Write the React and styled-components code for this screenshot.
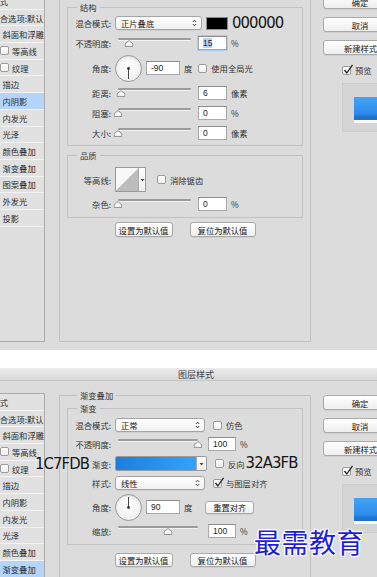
import React from 'react';
import styled, { createGlobalStyle } from 'styled-components';

const GlobalStyle = createGlobalStyle`
  html, body { margin: 0; padding: 0; background: #fff; }
  body { font-family: "Noto Sans CJK SC", "Noto Sans", sans-serif; overflow: hidden; }
  * { box-sizing: border-box; }
`;

const Page = styled.div`
  position: relative;
  width: 377px;
  height: 577px;
  overflow: hidden;
  background: #fff;
`;

const Dialog = styled.div`
  width: 400px;
  height: ${p => p.$h}px;
  background: #dcdcdc;
  overflow: hidden;
`;

const Gap = styled.div`
  height: 18px;
`;

const TitleBar = styled.div`
  height: 13px;
  display: flex;
  align-items: center;
  justify-content: center;
  padding-right: 8px;
  background: linear-gradient(#ececec, #d8d8d8);
  border-bottom: 1px solid #c6c6c6;
  font-size: 9px;
  color: #444;
`;

const Body = styled.div`
  display: flex;
  align-items: flex-start;
  height: ${p => p.$h}px;
  margin-top: ${p => p.$offset}px;
  padding: 8px 0;
`;

const Sidebar = styled.div`
  flex-shrink: 0;
  align-self: stretch;
  width: 60px;
  margin: 4px 0 0 -15px;
  background: #dedede;
  border: 1px solid #acacac;
  border-left: none;
`;

const indents = { head: 6.5, plain: 6.5, fx: 17.5, sub: 15 };

const Item = styled.div`
  height: 16.7px;
  display: flex;
  align-items: center;
  gap: 3px;
  padding-left: ${p => indents[p.$kind]}px;
  background: ${p => (p.$active ? '#b4d4fa' : '#e1e1e1')};
  border-bottom: 1px solid #f3f3f3;
  font-size: 8.3px;
  color: #2c2c2c;
  white-space: nowrap;
`;

const Main = styled.fieldset`
  flex-shrink: 0;
  align-self: stretch;
  width: 252px;
  margin: 0 0 0 14px;
  padding: 0 7px;
  border: 1px solid #c2c2c2;
  min-width: 0;
`;

const Group = styled.fieldset`
  margin: ${p => p.$mt || 0}px 0 0;
  padding: ${p => p.$pt}px 0 ${p => p.$pb}px;
  border: 1px solid #c2c2c2;
  min-width: 0;
`;

const Legend = styled.legend`
  margin-left: ${p => p.$ml}px;
  padding: 0 3px;
  font-size: 8.3px;
  line-height: 13px;
  color: #333;
`;

const Rows = styled.div`
  display: flex;
  flex-direction: column;
  gap: ${p => p.$gap}px;
`;

const Row = styled.div`
  position: relative;
  display: flex;
  align-items: center;
  gap: 4px;
  height: ${p => p.$h || 14}px;
`;

const Label = styled.span`
  flex-shrink: 0;
  width: 43px;
  text-align: right;
  font-size: 8.3px;
  color: #333;
  white-space: nowrap;
`;

const Text = styled.span`
  margin-left: ${p => p.$ml || 0}px;
  font-size: 8.3px;
  color: #333;
  white-space: nowrap;
`;

const Annotation = styled.span`
  margin-left: ${p => p.$ml || 0}px;
  font-family: "Liberation Sans Narrow", "DejaVu Sans Condensed", "Liberation Sans", sans-serif;
  font-size: 16.5px;
  letter-spacing: -0.9px;
  color: #151515;
  line-height: 1;
  white-space: nowrap;
`;

const FloatingAnnotation = styled(Annotation)`
  position: absolute;
  left: -33px;
  top: 50%;
  transform: translateY(-50%);
`;

const Select = styled.div`
  flex-shrink: 0;
  width: ${p => p.$w}px;
  height: 14px;
  display: flex;
  align-items: center;
  justify-content: space-between;
  padding: 0 4px 0 5px;
  background: linear-gradient(#ffffff, #f1f1f1);
  border: 1px solid #a5a5a5;
  border-radius: 3px;
  box-shadow: 0 1px 0 rgba(0, 0, 0, 0.06);
  font-size: 8.3px;
  color: #222;
`;

const Swatch = styled.div`
  flex-shrink: 0;
  width: 22px;
  height: 13px;
  background: #000;
  border: 1px solid #8a8a8a;
`;

const Field = styled.div`
  flex-shrink: 0;
  width: ${p => p.$w}px;
  height: 14px;
  margin-left: ${p => p.$ml || 0}px;
  display: flex;
  align-items: center;
  padding-left: 4px;
  background: #fff;
  border: 1px solid #a8a8a8;
  border-top-color: #8e8e8e;
  box-shadow: ${p => (p.$focus ? '0 0 0 1px #a9c9ee' : 'none')};
  font-family: "Liberation Sans", Arial, sans-serif;
  font-size: 8.5px;
  color: #1e1e1e;
`;

const Selected = styled.span`
  background: #b3d3f8;
`;

const SliderWrap = styled.div`
  position: relative;
  flex-shrink: 0;
  width: ${p => p.$w}px;
  height: 14px;
`;

const Track = styled.div`
  position: absolute;
  top: 1.5px;
  left: 3px;
  right: 3px;
  height: 2px;
  border-radius: 1px;
  background: #9c9c9c;
  box-shadow: 0 1px 0 #f2f2f2;
`;

const ThumbIcon = styled.svg`
  position: absolute;
  top: 4px;
  transform: translateX(-50%);
`;

const DialFace = styled.div`
  flex-shrink: 0;
  width: 27px;
  height: 27px;
  border-radius: 50%;
  border: 1px solid #9b9b9b;
  background: radial-gradient(circle at 50% 40%, #ffffff, #eaeaea);
  box-shadow: inset 0 1px 2px rgba(0, 0, 0, 0.12);
`;

const CheckBox = styled.div`
  position: relative;
  flex-shrink: 0;
  width: 9px;
  height: 9px;
  margin-left: ${p => p.$ml || 0}px;
  background: linear-gradient(#ffffff, #efefef);
  border: 1px solid #9c9c9c;
  border-radius: 2px;
`;

const CheckMark = styled.svg`
  position: absolute;
  left: 0;
  top: -3px;
`;

const Button = styled.button`
  flex-shrink: 0;
  width: ${p => (p.$w ? `${p.$w}px` : '100%')};
  height: ${p => p.$h || 15}px;
  margin-left: ${p => p.$ml || 0}px;
  padding: 0 0 0 ${p => p.$pl || 0}px;
  display: flex;
  align-items: center;
  justify-content: center;
  background: linear-gradient(#ffffff, #eeeeee);
  border: 1px solid #a9a9a9;
  border-radius: 3px;
  box-shadow: 0 1px 0 rgba(0, 0, 0, 0.06);
  font-family: inherit;
  font-size: 8.3px;
  color: #222;
  white-space: nowrap;
`;

const ButtonRow = styled.div`
  display: flex;
  justify-content: center;
  gap: 17px;
  margin-top: ${p => p.$mt}px;
`;

const GradientBar = styled.div`
  flex-shrink: 0;
  display: flex;
  width: 92px;
  height: 15px;
  border: 1px solid #9a9a9a;
  border-radius: 2px;
  overflow: hidden;
`;

const GradientFill = styled.div`
  flex: 1;
  background: linear-gradient(90deg, #1c7fdb, #32a3fb);
`;

const DropPart = styled.div`
  width: ${p => p.$w || 10}px;
  display: flex;
  align-items: center;
  justify-content: center;
  background: linear-gradient(#ffffff, #eeeeee);
  border-left: 1px solid #a8a8a8;
`;

const Contour = styled.div`
  flex-shrink: 0;
  display: flex;
  width: 31px;
  height: 25px;
  border: 1px solid #9a9a9a;
`;

const ContourCurve = styled.div`
  flex: 1;
  background: linear-gradient(to bottom right, #f8f8f8 50%, #bdbdbd 50%);
`;

const Side = styled.div`
  flex-shrink: 0;
  width: 74px;
  margin: 6px 0 0 12px;
  display: flex;
  flex-direction: column;
  gap: 8px;
`;

const PreviewCheck = styled.div`
  height: 14px;
  display: flex;
  align-items: center;
  gap: 4px;
  padding-left: 19px;
`;

const PreviewBox = styled.div`
  width: 60px;
  height: 49px;
  margin: -2px 0 0 19px;
  padding: 13px 0 0 11px;
  background: #d5d5d5;
  border: 1px solid #cbcbcb;
`;

const PreviewSwatch = styled.div`
  height: 26px;
  background: linear-gradient(#45a3f6, #2e8ced 70%, #1f72cc 88%);
  border-bottom: 3px solid #fafafa;
`;

const Watermark = styled.div`
  position: absolute;
  left: 254px;
  top: 527px;
  font-family: "Noto Sans CJK SC", sans-serif;
  font-size: 27px;
  letter-spacing: 0.5px;
  color: #1d1de0;
  line-height: 1.1;
  text-shadow: 0 0 2px #fff, 0 0 2px #fff, 1px 1px 1px #fff, -1px -1px 1px #fff, 1px -1px 1px #fff, -1px 1px 1px #fff;
`;

function Arrows() {
  return (
    <svg width="5" height="8" viewBox="0 0 5 8">
      <path d="M0.8 3 L2.5 1.2 L4.2 3 M0.8 5 L2.5 6.8 L4.2 5" fill="none" stroke="#333" strokeWidth="0.9" />
    </svg>
  );
}

function Caret() {
  return (
    <svg width="5" height="4" viewBox="0 0 5 4">
      <path d="M0.5 1 L4.5 1 L2.5 3.5 Z" fill="#444" />
    </svg>
  );
}

function Slider({ w, pct }) {
  return (
    <SliderWrap $w={w}>
      <Track />
      <ThumbIcon width="9" height="7" viewBox="0 0 9 7" style={{ left: 3 + pct * (w - 6) }}>
        <path d="M4.5 0.6 L8.4 3.8 L8.4 6.4 L0.6 6.4 L0.6 3.8 Z" fill="#fbfbfb" stroke="#858585" strokeWidth="0.9" strokeLinejoin="round" />
      </ThumbIcon>
    </SliderWrap>
  );
}

function Dial({ angle }) {
  const a = (angle * Math.PI) / 180;
  const x = 12.5 + 10.5 * Math.cos(a);
  const y = 12.5 - 10.5 * Math.sin(a);
  return (
    <DialFace>
      <svg width="25" height="25" viewBox="0 0 25 25">
        <line x1="12.5" y1="12.5" x2={x} y2={y} stroke="#444" strokeWidth="1" />
        <circle cx="12.5" cy="12.5" r="1.4" fill="#333" />
      </svg>
    </DialFace>
  );
}

function Check({ on, ml }) {
  return (
    <CheckBox $ml={ml}>
      {on && (
        <CheckMark width="11" height="11" viewBox="0 0 11 11">
          <path d="M1.5 6 L3.8 9 L9.5 0.8" fill="none" stroke="#222" strokeWidth="1.3" />
        </CheckMark>
      )}
    </CheckBox>
  );
}

const effects = [
  { kind: 'fx', text: '斜面和浮雕' },
  { kind: 'sub', text: '等高线' },
  { kind: 'sub', text: '纹理' },
  { kind: 'fx', text: '描边' },
  { kind: 'fx', text: '内阴影' },
  { kind: 'fx', text: '内发光' },
  { kind: 'fx', text: '光泽' },
  { kind: 'fx', text: '颜色叠加' },
  { kind: 'fx', text: '渐变叠加' },
  { kind: 'fx', text: '图案叠加' },
  { kind: 'fx', text: '外发光' },
  { kind: 'fx', text: '投影' },
];

function StyleList({ active }) {
  const items = [{ kind: 'head', text: '样式' }, { kind: 'plain', text: '混合选项:默认' }, ...effects];
  return (
    <Sidebar>
      {items.map(it => (
        <Item key={it.text} $kind={it.kind} $active={it.text === active}>
          {it.kind === 'sub' && <Check />}
          {it.text}
        </Item>
      ))}
    </Sidebar>
  );
}

function SideColumn() {
  return (
    <Side>
      <Button>确定</Button>
      <Button>取消</Button>
      <Button $pl={8}>新建样式...</Button>
      <PreviewCheck>
        <Check on />
        <Text>预览</Text>
      </PreviewCheck>
      <PreviewBox>
        <PreviewSwatch />
      </PreviewBox>
    </Side>
  );
}

function InnerShadowDialog() {
  return (
    <Dialog $h={350}>
      <Body $h={370} $offset={-20}>
        <StyleList active="内阴影" />
        <Main>
          <Legend $ml={10}>内阴影</Legend>
          <Group $pt={2} $pb={5}>
            <Legend $ml={9}>结构</Legend>
            <Rows $gap={6}>
              <Row>
                <Label>混合模式:</Label>
                <Select $w={87}>
                  正片叠底
                  <Arrows />
                </Select>
                <Swatch />
                <Annotation>000000</Annotation>
              </Row>
              <Row>
                <Label>不透明度:</Label>
                <Slider w={79} pct={0.15} />
                <Field $w={29} $focus>
                  <Selected>15</Selected>
                </Field>
                <Text>%</Text>
              </Row>
              <Row $h={24}>
                <Label>角度:</Label>
                <Dial angle={-90} />
                <Field $w={34}>-90</Field>
                <Text>度</Text>
                <Check ml={2} />
                <Text>使用全局光</Text>
              </Row>
              <Row>
                <Label>距离:</Label>
                <Slider w={79} pct={0.04} />
                <Field $w={29}>6</Field>
                <Text>像素</Text>
              </Row>
              <Row>
                <Label>阻塞:</Label>
                <Slider w={79} pct={0} />
                <Field $w={29}>0</Field>
                <Text>%</Text>
              </Row>
              <Row>
                <Label>大小:</Label>
                <Slider w={79} pct={0} />
                <Field $w={29}>0</Field>
                <Text>像素</Text>
              </Row>
            </Rows>
          </Group>
          <Group $mt={3} $pt={5} $pb={6}>
            <Legend $ml={9}>品质</Legend>
            <Rows $gap={5}>
              <Row $h={25}>
                <Label>等高线:</Label>
                <Contour>
                  <ContourCurve />
                  <DropPart $w={7}>
                    <Caret />
                  </DropPart>
                </Contour>
                <Check ml={7} />
                <Text>消除锯齿</Text>
              </Row>
              <Row>
                <Label>杂色:</Label>
                <Slider w={79} pct={0} />
                <Field $w={29}>0</Field>
                <Text>%</Text>
              </Row>
            </Rows>
          </Group>
          <ButtonRow $mt={4}>
            <Button $w={58}>设置为默认值</Button>
            <Button $w={66}>复位为默认值</Button>
          </ButtonRow>
        </Main>
        <SideColumn />
      </Body>
    </Dialog>
  );
}

function GradientDialog() {
  return (
    <Dialog $h={209}>
      <TitleBar>图层样式</TitleBar>
      <Body $h={260} $offset={0}>
        <StyleList active="渐变叠加" />
        <Main>
          <Legend $ml={10}>渐变叠加</Legend>
          <Group $pt={3} $pb={6}>
            <Legend $ml={9}>渐变</Legend>
            <Rows $gap={5}>
              <Row>
                <Label>混合模式:</Label>
                <Select $w={90}>
                  正常
                  <Arrows />
                </Select>
                <Check ml={4} />
                <Text>仿色</Text>
              </Row>
              <Row>
                <Label>不透明度:</Label>
                <Slider w={86} pct={1} />
                <Field $w={28} $ml={3}>100</Field>
                <Text>%</Text>
              </Row>
              <Row $h={15}>
                <FloatingAnnotation>1C7FDB</FloatingAnnotation>
                <Label>渐变:</Label>
                <GradientBar>
                  <GradientFill />
                  <DropPart>
                    <Caret />
                  </DropPart>
                </GradientBar>
                <Check ml={4} />
                <Text>反向</Text>
                <Annotation $ml={-3}>32A3FB</Annotation>
              </Row>
              <Row>
                <Label>样式:</Label>
                <Select $w={90}>
                  线性
                  <Arrows />
                </Select>
                <Check on ml={4} />
                <Text>与图层对齐</Text>
              </Row>
              <Row $h={24}>
                <Label>角度:</Label>
                <Dial angle={90} />
                <Field $w={34}>90</Field>
                <Text>度</Text>
                <Button $w={49} $h={13} $ml={9}>重置对齐</Button>
              </Row>
              <Row>
                <Label>缩放:</Label>
                <Slider w={86} pct={0.625} />
                <Field $w={28} $ml={3}>100</Field>
                <Text>%</Text>
              </Row>
            </Rows>
          </Group>
          <ButtonRow $mt={8}>
            <Button $w={58} $h={14}>设置为默认值</Button>
            <Button $w={66} $h={14}>复位为默认值</Button>
          </ButtonRow>
        </Main>
        <SideColumn />
      </Body>
    </Dialog>
  );
}

export default function App() {
  return (
    <Page>
      <GlobalStyle />
      <InnerShadowDialog />
      <Gap />
      <GradientDialog />
      <Watermark>最需教育</Watermark>
    </Page>
  );
}
